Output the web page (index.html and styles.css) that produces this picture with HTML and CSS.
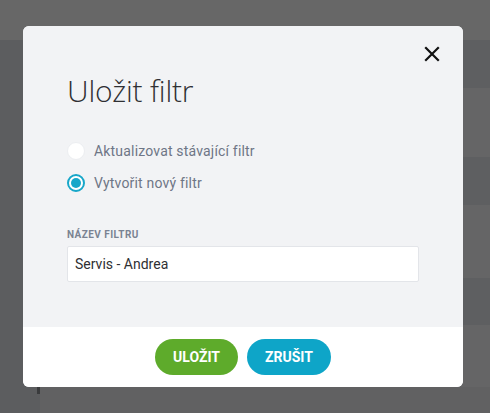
FILE: index.html
```html
<!DOCTYPE html>
<html lang="cs">
<head>
<meta charset="utf-8">
<title>Uložit filtr</title>
<link rel="stylesheet" href="styles.css">
</head>
<body>
<div class="page">
  <div class="page-header"></div>
  <div class="page-rows">
    <div class="row dark" style="height:48px"></div>
    <div class="row light" style="height:69px"></div>
    <div class="row dark" style="height:48px"></div>
    <div class="row light" style="height:73px"></div>
    <div class="row dark" style="height:47px"></div>
    <div class="row light" style="height:62px"></div>
    <div class="row bottom" style="height:26px"></div>
  </div>
  <div class="sidebar"></div>
  <div class="shadow-mark"></div>
</div>

<div class="modal">
  <div class="modal-body">
    <button class="close" aria-label="Zavřít">
      <svg width="16" height="16" viewBox="0 0 16 16"><path d="M2 2 L14 14 M14 2 L2 14" stroke="#111" stroke-width="2.2" stroke-linecap="square" fill="none"/></svg>
    </button>
    <h1 class="title">Uložit filtr</h1>
    <div class="options">
      <label class="option"><span class="radio"></span><span class="opt-text">Aktualizovat stávající filtr</span></label>
      <label class="option"><span class="radio checked"></span><span class="opt-text">Vytvořit nový filtr</span></label>
    </div>
    <div class="field">
      <div class="field-label">NÁZEV FILTRU</div>
      <div class="input">Servis - Andrea</div>
    </div>
  </div>
  <div class="modal-footer">
    <button class="btn btn-green">ULOŽIT</button>
    <button class="btn btn-blue">ZRUŠIT</button>
  </div>
</div>
</body>
</html>
```
FILE: styles.css
```css
html, body {
  margin: 0;
  padding: 0;
}
body {
  width: 490px;
  height: 413px;
  overflow: hidden;
  background: #5d5e60;
  font-family: Roboto, "Liberation Sans", sans-serif;
  position: relative;
}
.page {
  width: 490px;
  height: 413px;
  display: flex;
  flex-direction: column;
}
.page-header {
  height: 40px;
  background: #676767;
  flex: none;
}
.page-rows {
  display: flex;
  flex-direction: column;
}
.row.dark { background: #5e5f61; }
.row.light { background: #656566; }
.row.bottom { background: #616162; }
.sidebar {
  position: absolute;
  left: 0;
  top: 40px;
  width: 40px;
  height: 373px;
  background: #5c5d5f;
}
.shadow-mark {
  position: absolute;
  left: 37px;
  top: 380px;
  width: 3px;
  height: 14px;
  background: #3a3b3d;
}
.modal {
  position: absolute;
  left: 23px;
  top: 26px;
  width: 440px;
  height: 361px;
  border-radius: 6px;
  overflow: hidden;
  background: #f2f3f5;
  display: flex;
  flex-direction: column;
}
.modal-body {
  position: relative;
  flex: 1;
  padding: 45px 44px 0 44px;
  background: #f2f3f5;
}
.close {
  position: absolute;
  top: 20px;
  right: 23px;
  width: 16px;
  height: 16px;
  padding: 0;
  border: 0;
  background: none;
  display: block;
}
.close svg { display: block; }
.title {
  margin: 0;
  font-family: "Open Sans", "Noto Sans", sans-serif;
  font-weight: 300;
  font-size: 30px;
  line-height: 40px;
  color: #2f3033;
  letter-spacing: -0.2px;
}
.options {
  margin-top: 31px;
  display: flex;
  flex-direction: column;
  gap: 14px;
}
.option {
  display: flex;
  align-items: center;
  gap: 9px;
  height: 18px;
}
.radio {
  width: 18px;
  height: 18px;
  border-radius: 50%;
  background: #fff;
  box-sizing: border-box;
  border: 1px solid #eceef1;
  position: relative;
  flex: none;
}
.radio.checked {
  border: 2px solid #18a7c9;
}
.radio.checked::after {
  content: "";
  position: absolute;
  left: 2px;
  top: 2px;
  width: 10px;
  height: 10px;
  border-radius: 50%;
  background: #18a7c9;
}
.opt-text {
  font-size: 14px;
  color: #6e7686;
  line-height: 18px;
  letter-spacing: 0.18px;
}
.field {
  margin-top: 37px;
}
.field-label {
  font-size: 10px;
  font-weight: 700;
  color: #7a8392;
  line-height: 12px;
  letter-spacing: 0.45px;
}
.input {
  margin-top: 5px;
  width: 352px;
  height: 36px;
  box-sizing: border-box;
  background: #fff;
  border: 1px solid #e3e5e9;
  border-radius: 2px;
  padding: 0 7px;
  font-size: 14px;
  line-height: 34px;
  color: #2f3033;
}
.modal-footer {
  flex: none;
  height: 60px;
  background: #fff;
  display: flex;
  justify-content: center;
  align-items: center;
  gap: 9px;
}
.btn {
  height: 36px;
  border: 0;
  border-radius: 18px;
  padding: 0 17px;
  font-family: Roboto, "Liberation Sans", sans-serif;
  font-weight: 700;
  font-size: 14px;
  color: #fff;
  letter-spacing: 0;
}
.btn-green { background: #5eab2b; width: 83px; }
.btn-blue { background: #0ea5c8; width: 84px; }
```
